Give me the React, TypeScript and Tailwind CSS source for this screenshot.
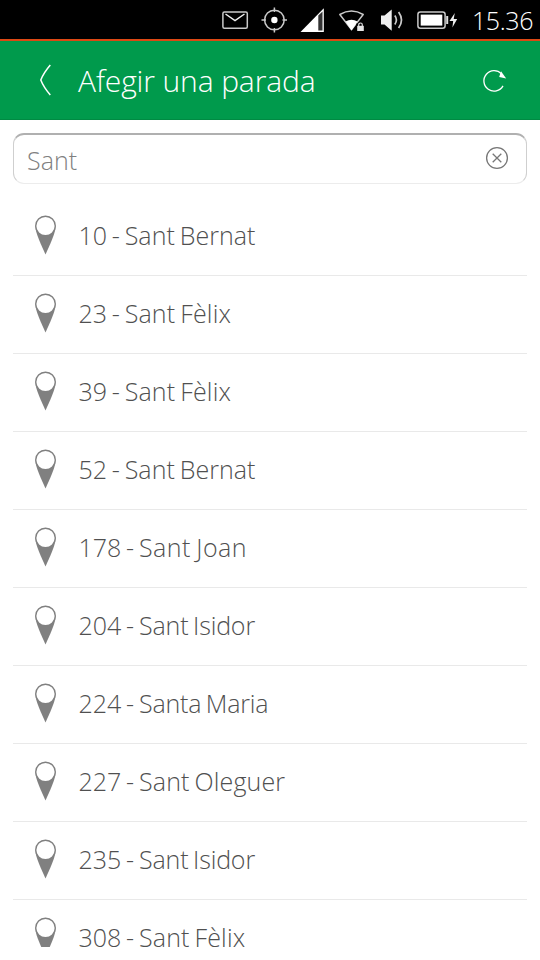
const stops = [
  { id: 10, name: 'Sant Bernat', tracking: 'tracking-[0.05px]' },
  { id: 23, name: 'Sant Fèlix', tracking: 'tracking-[0.15px]' },
  { id: 39, name: 'Sant Fèlix', tracking: 'tracking-[0.15px]' },
  { id: 52, name: 'Sant Bernat', tracking: 'tracking-[0.05px]' },
  { id: 178, name: 'Sant Joan', tracking: 'tracking-[0.5px]' },
  { id: 204, name: 'Sant Isidor', tracking: 'tracking-[-0.15px]' },
  { id: 224, name: 'Santa Maria', tracking: 'tracking-[-0.2px]' },
  { id: 227, name: 'Sant Oleguer', tracking: 'tracking-[0.15px]' },
  { id: 235, name: 'Sant Isidor', tracking: 'tracking-[-0.15px]' },
  { id: 308, name: 'Sant Fèlix', tracking: 'tracking-[0.15px]' },
];

function StatusIcons() {
  return (
    <svg width="240" height="39" viewBox="220 0 240 39" fill="none" stroke="#c9c9c9" strokeWidth="1.5">
      {/* mail */}
      <rect x="222.9" y="11.9" width="24.4" height="16.4" rx="1.5" />
      <path d="M225.5 14 L235 20.5 L244.5 14" stroke="#eee" />
      {/* location */}
      <circle cx="274.4" cy="20" r="9.8" />
      <path d="M274.4 7.5v4.5M274.4 28v4.5M261.5 20h4.5M282.5 20h4.5" />
      <circle cx="274.4" cy="20" r="3.2" fill="#fff" stroke="none" />
      {/* signal */}
      <path d="M300.5 32 L323.8 8.2 V32 Z" fill="#fff" stroke="none" />
      <path d="M318.3 15.5 L322.5 11.5 V30.6 H318.3 Z" fill="#333" stroke="none" />
      {/* wifi */}
      <path d="M339.8 14.5 Q351.5 7.5 363.2 14.5 L351.5 29.6 Z" strokeLinejoin="round" />
      <path d="M345.5 21.6 Q351.5 17.8 357.5 21.6 L351.5 30.5 Z" fill="#fff" stroke="none" />
      <rect x="356.3" y="23.5" width="8.2" height="8" fill="#000" stroke="none" />
      <rect x="357.2" y="25.8" width="6.6" height="5.2" fill="#e5e5e5" stroke="none" />
      <path d="M358.7 26v-1.2a1.8 1.8 0 0 1 3.6 0v1.2" stroke="#ddd" strokeWidth="1.2" />
      {/* volume */}
      <path d="M381 15.5h3.5l7.2-6v21.2L384.5 24.5H381Z" fill="#eee" stroke="none" />
      <path d="M394.8 15.5q3.2 4.5 0 9M398.6 12q5.8 8 0 16" strokeWidth="1.7" />
      {/* battery */}
      <rect x="417.9" y="11.9" width="27.2" height="16.4" rx="2.5" />
      <rect x="420.7" y="14.6" width="21.6" height="11" fill="#fff" stroke="none" />
      <path d="M447.2 16v8" stroke="#ddd" strokeWidth="2" />
      <path d="M454.8 13l-5.3 8h3.7l-.8 6.5 4.8-8.5h-3.5Z" fill="#eee" stroke="none" />
    </svg>
  );
}

function StatusBar() {
  return (
    <div className="flex h-[39px] items-center justify-end bg-black pr-[7px]">
      <StatusIcons />
      <span className="mt-px ml-3 w-[61px] whitespace-nowrap text-[25px] leading-[39px] font-light tracking-[-0.4px] text-white">
        15.36
      </span>
    </div>
  );
}

function Header() {
  return (
    <header className="flex h-[81px] items-center border-t-2 border-b border-t-[#dd4814] border-b-[#008a43] bg-[#009a4c] pr-[33px] pl-[39px] text-white">
      <svg width="13" height="32" viewBox="0 0 13 32" fill="none" stroke="#fff" strokeWidth="1.5">
        <path d="M11.3 1 Q4.5 9 1.8 16 Q4.5 23 11.3 31" />
      </svg>
      <h1 className="mt-px ml-[26px] flex-1 whitespace-nowrap text-[30px] leading-[40px] font-light tracking-[-0.12px]">
        Afegir una parada
      </h1>
      <svg width="26" height="26" viewBox="0 0 26 26" fill="none" stroke="#fff" strokeWidth="1.3">
        <path d="M22 18.9A10.2 10.2 0 1 1 20.5 6.9" />
        <path d="M20 4.2 L25.2 11.5 L18.2 10 Z" fill="#fff" stroke="none" />
      </svg>
    </header>
  );
}

function SearchField() {
  return (
    <div className="mx-[13px] mt-[13px] flex h-[51px] items-center justify-between rounded-[11px] border border-t-2 border-x-[#cfcfcf] border-t-[#b0b0b0] border-b-[#ececec] bg-white pr-[17.5px] pl-[13px]">
      <span className="mt-px text-[25px] leading-[34px] font-light text-[#808080]">Sant</span>
      <svg width="24" height="24" viewBox="0 0 24 24" fill="none" stroke="#777" strokeWidth="1.3" className="mb-0.5">
        <circle cx="12" cy="12" r="10.4" />
        <path d="M7.7 7.7l8.6 8.6M16.3 7.7l-8.6 8.6" />
      </svg>
    </div>
  );
}

function PinIcon() {
  return (
    <svg width="22" height="40" viewBox="0 0 22 40" fill="none" className="shrink-0">
      <path d="M.5 11 C.5 17 3 23 10.5 39.5 C18 23 20.5 17 20.5 11 Z" fill="#808080" />
      <circle cx="10.5" cy="11" r="9.8" fill="#fff" stroke="#808080" strokeWidth="1.4" />
    </svg>
  );
}

export default function App() {
  return (
    <div className="h-[960px] w-[540px] overflow-hidden bg-white font-['Open_Sans',sans-serif]">
      <StatusBar />
      <Header />
      <SearchField />
      <ul className="mx-[13px] mt-[14px] h-[749px] overflow-hidden">
        {stops.map((stop) => (
          <li key={stop.id} className="flex h-[78px] items-center border-b border-[#e9e9e9] pb-[3px] pl-[22px]">
            <PinIcon />
            <span className="ml-[21.5px] whitespace-pre text-[25px] leading-[34px] font-light text-[#505050] [word-spacing:-1.7px]">
              {stop.id} - <span className={stop.tracking}>{stop.name}</span>
            </span>
          </li>
        ))}
      </ul>
    </div>
  );
}
